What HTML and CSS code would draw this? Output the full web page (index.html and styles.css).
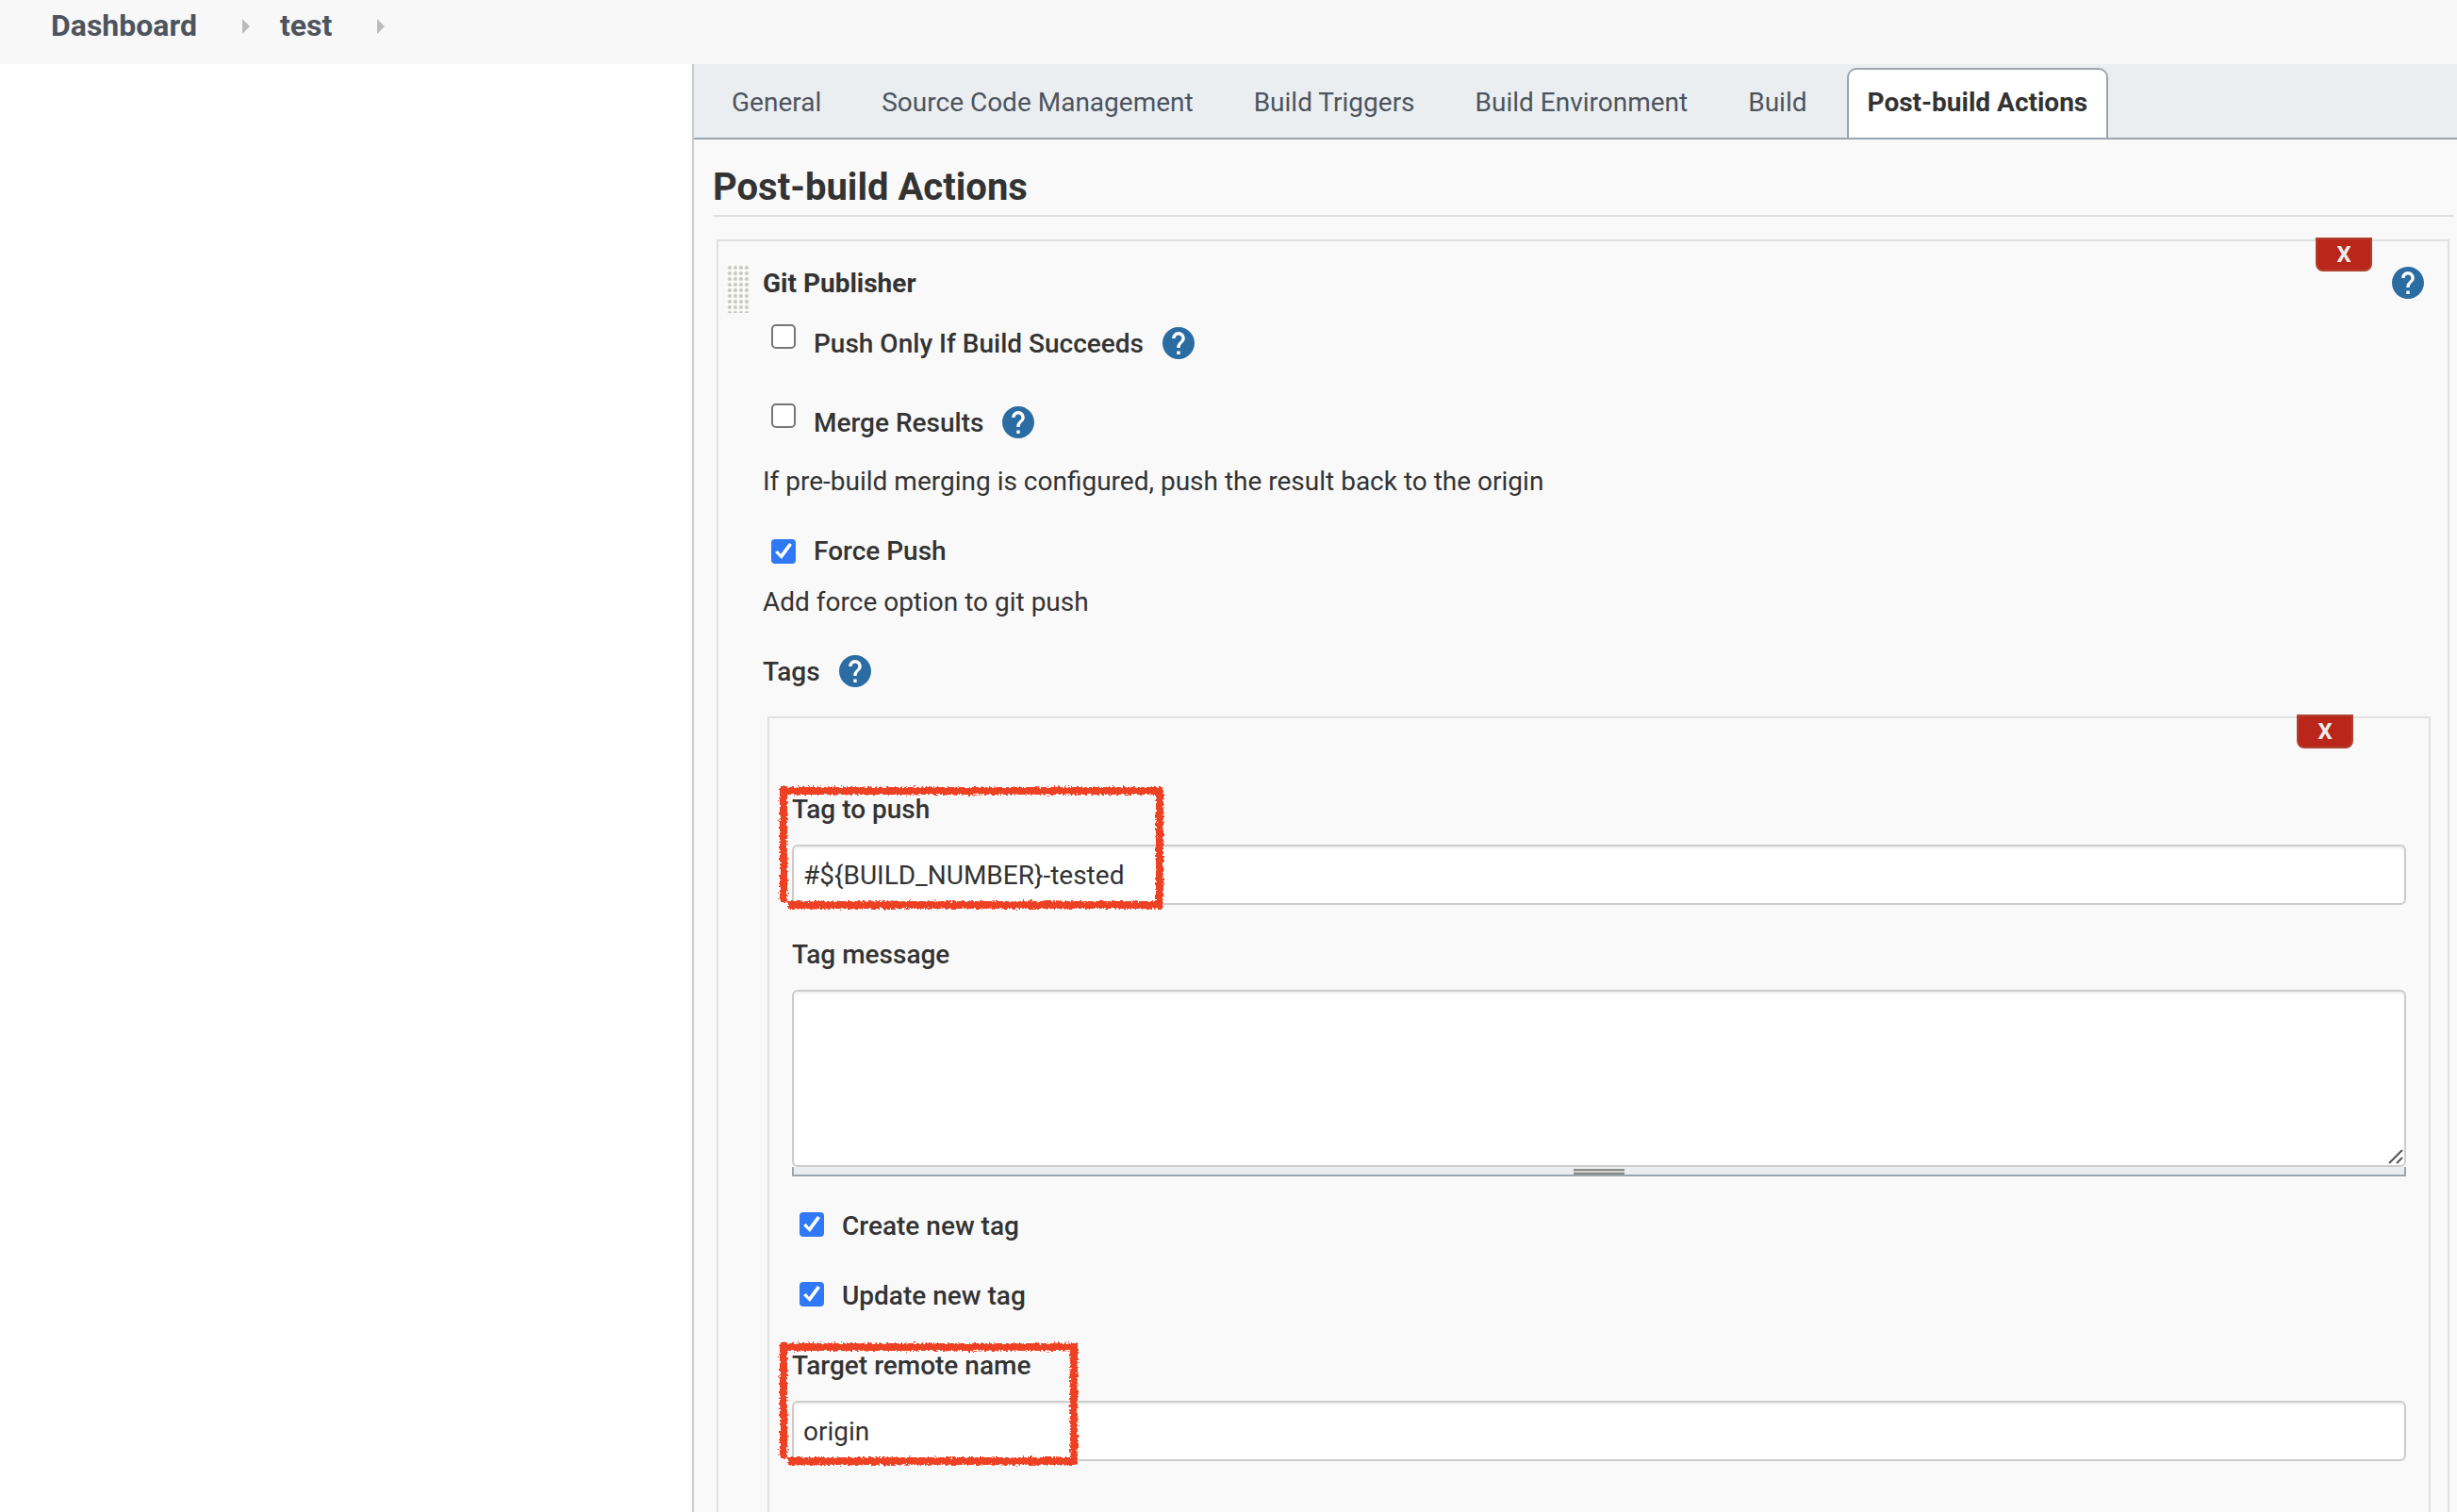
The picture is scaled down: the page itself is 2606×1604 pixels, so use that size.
FILE: index.html
```html
<!DOCTYPE html>
<html lang="en">
<head>
<meta charset="utf-8">
<title>test Config</title>
<link rel="stylesheet" href="styles.css">
</head>
<body>
<svg class="defs" aria-hidden="true">
  <symbol id="help" viewBox="2 2 20 20">
    <circle cx="12" cy="12" r="9" fill="#fff"/>
    <path fill="#2b6ca3" d="M12 2C6.48 2 2 6.48 2 12s4.48 10 10 10 10-4.48 10-10S17.52 2 12 2zm1 17h-2v-2h2v2zm2.07-7.75l-.9.92C13.45 12.9 13 13.5 13 15h-2v-.5c0-1.1.45-2.1 1.17-2.83l1.24-1.26c.37-.36.59-.86.59-1.41 0-1.1-.9-2-2-2s-2 .9-2 2H8c0-2.21 1.79-4 4-4s4 1.79 4 4c0 .88-.36 1.68-.93 2.25z"/>
  </symbol>
  <filter id="crayon" filterUnits="userSpaceOnUse" x="0" y="0" width="600" height="200">
    <feTurbulence type="fractalNoise" baseFrequency="0.45" numOctaves="3" seed="4" result="n"/>
    <feDisplacementMap in="SourceGraphic" in2="n" scale="6" xChannelSelector="R" yChannelSelector="G"/>
  </filter>
</svg>

<header>
  <nav class="crumbs" aria-label="Breadcrumb">
    <a href="#">Dashboard</a>
    <svg class="chevron" viewBox="0 0 8 16" aria-hidden="true"><path d="M0 0L8 8L0 16z"/></svg>
    <a href="#">test</a>
    <svg class="chevron" viewBox="0 0 8 16" aria-hidden="true"><path d="M0 0L8 8L0 16z"/></svg>
  </nav>
</header>

<div class="page">
  <aside class="side"></aside>
  <main>
    <nav class="tabs">
      <button class="tab">General</button>
      <button class="tab">Source Code Management</button>
      <button class="tab">Build Triggers</button>
      <button class="tab">Build Environment</button>
      <button class="tab">Build</button>
      <button class="tab tab-active">Post-build Actions</button>
    </nav>

    <form class="config">
      <h1>Post-build Actions</h1>
      <section class="chunk publisher">
        <button type="button" class="delete">X</button>
        <div class="grip"></div>
        <div class="publisher-body">
          <div class="title-row">
            <b>Git Publisher</b>
            <button type="button" class="help" aria-label="Help"><svg><use href="#help"/></svg></button>
          </div>

          <div class="check check-help">
            <input type="checkbox" id="push-only">
            <label for="push-only">Push Only If Build Succeeds</label>
            <button type="button" class="help" aria-label="Help"><svg><use href="#help"/></svg></button>
          </div>
          <div class="check check-help">
            <input type="checkbox" id="merge">
            <label for="merge">Merge Results</label>
            <button type="button" class="help" aria-label="Help"><svg><use href="#help"/></svg></button>
          </div>
          <p class="note">If pre-build merging is configured, push the result back to the origin</p>

          <div class="check check-force">
            <input type="checkbox" id="force" checked>
            <label for="force">Force Push</label>
          </div>
          <p class="note note-tight">Add force option to git push</p>

          <div class="tags-row">
            <span>Tags</span>
            <button type="button" class="help" aria-label="Help"><svg><use href="#help"/></svg></button>
          </div>

          <section class="chunk tag">
            <button type="button" class="delete">X</button>
            <div class="field">
              <label for="tag-name">Tag to push</label>
              <input type="text" id="tag-name" value="#${BUILD_NUMBER}-tested">
              <svg class="mark mark-wide" aria-hidden="true"><path filter="url(#crayon)" d="M13 8V131M13 13H412V134M18 134H416"/></svg>
            </div>
            <div class="field field-message">
              <label for="tag-message">Tag message</label>
              <div class="area">
                <textarea id="tag-message"></textarea>
                <svg class="corner" viewBox="0 0 16 16" aria-hidden="true"><path d="M1 15L15 1M9 15L15 9"/></svg>
              </div>
              <div class="resize"><i></i></div>
            </div>
            <div class="check check-tag">
              <input type="checkbox" id="create" checked>
              <label for="create">Create new tag</label>
            </div>
            <div class="check check-tag">
              <input type="checkbox" id="update" checked>
              <label for="update">Update new tag</label>
            </div>
            <div class="field">
              <label for="remote">Target remote name</label>
              <input type="text" id="remote" value="origin">
              <svg class="mark" aria-hidden="true"><path filter="url(#crayon)" d="M13 8V131M13 13H321V134M18 134H325"/></svg>
            </div>
          </section>
        </div>
      </section>
    </form>
  </main>
</div>
</body>
</html>
```

FILE: styles.css
```css
* {
  box-sizing: border-box;
}

body {
  margin: 0;
  min-height: 100vh;
  display: flex;
  flex-direction: column;
  background: #fff;
  color: #333;
  font: 400 28px/34px Roboto, "Liberation Sans", sans-serif;
}

button,
input,
textarea {
  font: inherit;
  color: inherit;
  margin: 0;
}

.defs {
  position: absolute;
  width: 0;
  height: 0;
}

header {
  background: #f8f8f8;
  padding: 8px 54px 20px;
}

.crumbs {
  display: flex;
  align-items: center;
}

.crumbs a {
  padding-bottom: 2px;
  color: #4d545d;
  font-size: 32px;
  font-weight: 700;
  line-height: 38px;
  text-decoration: none;
}

.chevron {
  width: 8px;
  height: 16px;
  margin: 0 32px 0 48px;
  fill: #bbb;
}

.page {
  flex: 1;
  display: flex;
}

.side {
  flex: 0 0 734px;
}

main {
  flex: 1;
  min-width: 0;
  display: flex;
  flex-direction: column;
  border-left: 2px solid #ccc;
  background: #f9f9f9;
}

.tabs {
  display: flex;
  gap: 20px;
  padding: 4px 18px 0;
  background: #eaeef1;
  border-bottom: 2px solid #9aa5ae;
}

.tab {
  padding: 18px 20px 20px;
  border: 2px solid transparent;
  border-bottom: 0;
  border-radius: 10px 10px 0 0;
  background: none;
  color: #4d545d;
}

.tab-active {
  background: #fff;
  border-color: #9aa5ae;
  color: #333;
  font-weight: 700;
}

.config {
  flex: 1;
  display: flex;
  flex-direction: column;
  padding: 26px 4px 0 20px;
}

h1 {
  margin: 0;
  padding-bottom: 4px;
  border-bottom: 2px solid #e0e0e0;
  font-size: 40px;
  font-weight: 700;
  line-height: 50px;
}

.chunk {
  position: relative;
  flex: 1;
  border: 2px solid #e0e0e0;
  border-bottom: 0;
}

.publisher {
  display: flex;
  gap: 15px;
  margin: 24px 4px 0;
  padding: 24px 18px 0 8px;
}

.grip {
  width: 24px;
  height: 52px;
  background: radial-gradient(circle at 4px 4px, #c4c4c0 1px, #fcfcfa 3px) 0 0 / 6px 6px;
}

.publisher-body {
  flex: 1;
  min-width: 0;
  display: flex;
  flex-direction: column;
  padding-top: 4px;
}

.delete {
  position: absolute;
  top: -4px;
  right: 80px;
  width: 60px;
  height: 36px;
  padding: 0;
  border: 2px solid #b04030;
  border-radius: 0 0 8px 8px;
  background: #ba261a;
  color: #eee;
  font-size: 24px;
  font-weight: 700;
  line-height: 32px;
}

.help {
  display: flex;
  margin: -1px 0 1px;
  padding: 0;
  border: 0;
  background: none;
}

.help svg {
  width: 34px;
  height: 34px;
}

.title-row {
  display: flex;
  justify-content: space-between;
  padding-right: 7px;
  margin-bottom: 26px;
}

.check {
  display: flex;
  align-items: flex-start;
  padding-left: 9px;
  font-weight: 500;
}

.check label {
  margin: 0 20px 0 19px;
}

.check input {
  appearance: none;
  width: 26px;
  height: 26px;
  border: 2px solid #767676;
  border-radius: 5px;
  background: #fff;
}

.check input:checked {
  border: 0;
  border-radius: 4px;
  background: #2f79f7;
}

.check input:checked::before {
  content: "";
  display: block;
  width: 26px;
  height: 26px;
  background: #fff;
  clip-path: polygon(4px 14px, 7px 12px, 10px 16px, 19px 4px, 22px 6px, 11px 21px);
}

.check-help {
  margin-bottom: 46px;
}

.check-help label {
  margin-top: 4px;
}

.check-help .help {
  margin-top: 3px;
}

.check-help + .note {
  margin-top: -18px;
}

.check-force {
  margin-top: 40px;
}

.check-force input {
  margin-top: 4px;
}

.note {
  margin: 0;
}

.note-tight {
  margin-top: 20px;
}

.tags-row {
  display: flex;
  gap: 20px;
  margin: 40px 0 30px;
  font-weight: 500;
}

.tag {
  margin-left: 5px;
  padding: 80px 24px 54px;
}

.field {
  position: relative;
  display: flex;
  flex-direction: column;
  gap: 20px;
}

.field > label {
  font-weight: 500;
}

.field input,
.area textarea {
  width: 100%;
  padding: 0 10px;
  border: 2px solid #ccc;
  border-radius: 6px;
  background: #fff;
  box-shadow: inset 0 2px 3px #0001;
}

.field input {
  height: 64px;
}

.field-message {
  margin: 36px 0;
}

.area {
  position: relative;
  display: flex;
}

.area textarea {
  height: 188px;
  resize: none;
}

.corner {
  position: absolute;
  right: 3px;
  bottom: 3px;
  width: 16px;
  height: 16px;
  fill: none;
  stroke: #555;
  stroke-width: 2;
}

.resize {
  display: flex;
  justify-content: center;
  height: 10px;
  margin-top: -20px;
  border: 2px solid #9aa5ae;
  border-top: 0;
  background: #eaeef1;
}

.resize i {
  width: 54px;
  height: 6px;
  margin-top: 2px;
  border: solid #888;
  border-width: 2px 0;
  background: #ccd0cc;
}

.check-tag {
  padding-left: 8px;
  margin-bottom: 40px;
}

.check-tag input {
  margin-top: 2px;
}

.mark {
  position: absolute;
  top: -16px;
  left: -22px;
  width: 340px;
  height: 150px;
  fill: none;
  stroke: #ee4023;
  stroke-width: 8;
  pointer-events: none;
}

.mark-wide {
  width: 430px;
}
```
